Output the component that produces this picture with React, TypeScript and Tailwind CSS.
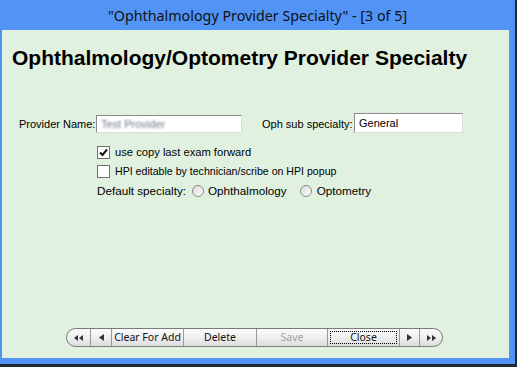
export default function App() {
  return (
    <div className="relative h-[367px] w-[517px] overflow-hidden bg-[#1e2a33]" style={{ fontFamily: '"Liberation Sans", Arial, sans-serif' }}>
      <div className="flex h-[364px] w-[515px] flex-col bg-[#5294f5]">
        <div className="flex h-[30px] items-center justify-center pt-[1px] text-[14.3px] text-[#111]" style={{ fontFamily: '"Noto Sans", "Open Sans", sans-serif' }}>
          "Ophthalmology Provider Specialty" - [3 of 5]
        </div>
        <div className="ml-[2px] mr-[6px] flex h-[328px] flex-col bg-[#e1f1df] text-[11px] text-black">
          <h1 className="ml-[10px] mt-[16px] text-[21px] font-bold leading-[24px]">
            Ophthalmology/Optometry Provider Specialty
          </h1>

          <div className="mt-[45px] flex items-center">
            <span className="ml-[17px] w-[77px]">Provider Name:</span>
            <div className="flex h-[18px] w-[146px] items-center border border-[#8c8c8c] border-r-[#dcdcdc] border-b-[#dcdcdc] bg-white px-[4px]">
              <span className="text-[#6f7989] blur-[1.2px]">Test Provider</span>
            </div>
            <span className="ml-[20px] w-[92px]">Oph sub specialty:</span>
            <div className="-mt-[2px] flex h-[20px] w-[109px] items-center border border-[#8c8c8c] border-r-[#dcdcdc] border-b-[#dcdcdc] bg-white px-[4px]">
              General
            </div>
          </div>

          <div className="ml-[95px] mt-[13px] flex flex-col gap-[6px]">
            <label className="flex h-[13px] items-center gap-[5px] text-[11.2px]">
              <span className="flex h-[13px] w-[13px] items-center justify-center border border-[#707070] bg-white">
                <svg width="9" height="9" viewBox="0 0 9 9">
                  <path d="M1 4.5 L3.5 7 L8 1.5" stroke="#111" strokeWidth="2" fill="none" />
                </svg>
              </span>
              use copy last exam forward
            </label>
            <label className="flex h-[13px] items-center gap-[5px] text-[10.6px]">
              <span className="h-[13px] w-[13px] border border-[#707070] bg-white" />
              HPI editable by technician/scribe on HPI popup
            </label>
            <div className="flex h-[13px] items-center text-[11.7px]">
              <span>Default specialty:</span>
              <span className="ml-[6px] h-[12px] w-[12px] rounded-full border border-[#8a8a8a] bg-gradient-to-br from-[#d8d8d8] to-white" />
              <span className="ml-[4px]">Ophthalmology</span>
              <span className="ml-[13px] h-[12px] w-[12px] rounded-full border border-[#8a8a8a] bg-gradient-to-br from-[#d8d8d8] to-white" />
              <span className="ml-[5px]">Optometry</span>
            </div>
          </div>

          <div
            className="mt-auto mb-[11px] ml-[64px] flex h-[19px] w-[377px] items-stretch overflow-hidden rounded-full border border-[#7a7a7a] bg-gradient-to-b from-[#fafafa] via-[#f0f0f0] to-[#dcdcdc] text-[10.5px] text-[#111]"
            style={{ fontFamily: '"Noto Sans", "Open Sans", sans-serif' }}
          >
            <NavBtn w="w-[24px]">
              <svg width="9" height="6" viewBox="0 0 9 6"><path d="M4 0 L0 3 L4 6Z M9 0 L5 3 L9 6Z" fill="#333" /></svg>
            </NavBtn>
            <NavBtn w="w-[21px]">
              <svg width="5" height="7" viewBox="0 0 5 7"><path d="M5 0 L0 3.5 L5 7Z" fill="#333" /></svg>
            </NavBtn>
            <NavBtn w="w-[72px]">Clear For Add</NavBtn>
            <NavBtn w="w-[73px]">Delete</NavBtn>
            <NavBtn w="w-[71px]" className="text-[#a0a0a0]">Save</NavBtn>
            <div className="flex w-[72px] items-center justify-center border-r border-[#9a9a9a] p-[2px]">
              <div className="flex h-full w-full items-center justify-center border border-dotted border-black">Close</div>
            </div>
            <NavBtn w="w-[20px]">
              <svg width="5" height="7" viewBox="0 0 5 7"><path d="M0 0 L5 3.5 L0 7Z" fill="#333" /></svg>
            </NavBtn>
            <div className="flex flex-1 items-center justify-center">
              <svg width="9" height="6" viewBox="0 0 9 6"><path d="M0 0 L4 3 L0 6Z M5 0 L9 3 L5 6Z" fill="#333" /></svg>
            </div>
          </div>
        </div>
      </div>
    </div>
  );
}

function NavBtn({ w, className = '', children }: { w: string; className?: string; children: React.ReactNode }) {
  return (
    <div className={`flex ${w} shrink-0 items-center justify-center border-r border-[#9a9a9a] ${className}`}>
      {children}
    </div>
  );
}
